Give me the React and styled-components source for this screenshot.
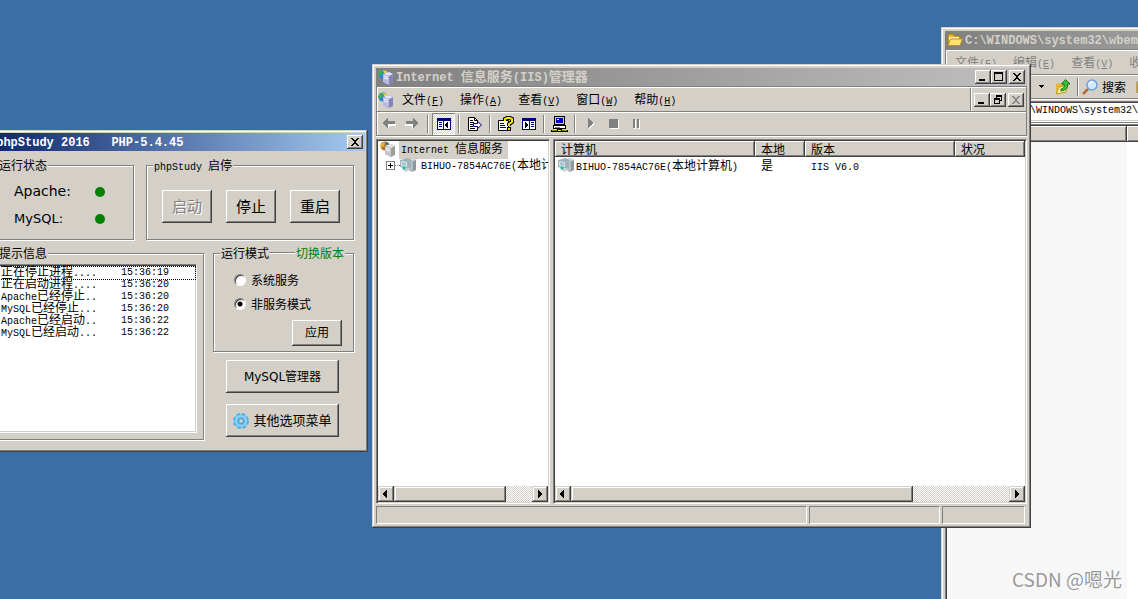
import React, { useState } from "react";
import styled, { createGlobalStyle, css } from "styled-components";

const GlobalStyle = createGlobalStyle`
  * {
    box-sizing: border-box;
  }

  body {
    background: #3a6ea5;
    color: #000;
    font-family: "Noto Sans CJK SC", sans-serif;
    font-size: 12px;
    line-height: 16px;
    margin: 0;
    overflow: hidden;
  }

  button,
  input {
    color: inherit;
    font: inherit;
    margin: 0;
    padding: 0;
  }

  svg {
    flex: none;
  }
`;

const raised = css`
  box-shadow: inset -1px -1px 0 #404040, inset 1px 1px 0 #fff,
    inset -2px -2px 0 #808080;
`;

const sunken = css`
  border: 1px solid;
  border-color: #808080 #fff #fff #808080;
  box-shadow: inset 1px 1px 0 #404040, inset -1px -1px 0 #d4d0c8;
  padding: 1px;
`;

const Desktop = styled.main`
  height: 100vh;
  overflow: hidden;
  position: relative;
`;

const Window = styled.section`
  background: #d4d0c8;
  box-shadow: inset -1px -1px 0 #404040, inset 1px 1px 0 #d4d0c8,
    inset -2px -2px 0 #808080, inset 2px 2px 0 #fff;
  display: flex;
  flex-direction: column;
  padding: 4px;
  position: absolute;
`;

const ExplorerWindow = styled(Window)`
  bottom: -20px;
  left: 941px;
  top: 27px;
  width: 480px;
`;

const IisWindow = styled(Window)`
  height: 464px;
  left: 372px;
  top: 64px;
  width: 659px;
`;

const StudyWindow = styled(Window)`
  height: 322px;
  left: -16px;
  padding: 3px;
  top: 130px;
  width: 384px;
`;

const TitleBar = styled.header`
  align-items: center;
  background: linear-gradient(
    to right,
    ${(props) => (props.$active ? "#0a246a, #a6caf0" : "#808080, #c0c0c0")}
  );
  color: ${(props) => (props.$active ? "#fff" : "#d4d0c8")};
  display: flex;
  flex: none;
  gap: 2px;
  height: 18px;
  padding: 0 2px;
`;

const Title = styled.h1`
  flex: 1;
  font-size: 13px;
  font-weight: bold;
  line-height: 18px;
  margin: 0;
  overflow: hidden;
  white-space: pre;
`;

const TitleLatin = styled.span`
  font-family: "Liberation Mono", monospace;
  font-size: 12px;
`;

const Latin = styled.span`
  font-family: "Liberation Mono", monospace;
  font-size: 10px;
`;

const CaptionButtons = styled.div`
  display: flex;

  button:last-child {
    margin-left: ${(props) => (props.$single ? 0 : 2)}px;
  }
`;

const CaptionButton = styled.button`
  ${raised}
  align-items: center;
  background: #d4d0c8;
  border: 0;
  color: ${(props) => (props.disabled ? "#808080" : "#000")};
  display: flex;
  height: 14px;
  justify-content: center;
  width: 16px;
`;

const Band = styled.div`
  align-items: center;
  border: 1px solid #808080;
  border-top-width: ${(props) => (props.$first ? 1 : 0)}px;
  box-shadow: inset 1px 1px 0 #fff, 0 1px 0 #fff;
  display: flex;
  flex: none;
  height: ${(props) => props.$height}px;
  padding: 1px 1px 0;
`;

const Menu = styled.nav`
  color: ${(props) => (props.$dim ? "#808080" : "#000")};
  display: flex;
  flex: 1;
`;

const MenuItem = styled.button`
  background: none;
  border: 0;
  flex: none;
  padding: 2px 8px 0;
  white-space: nowrap;
`;

const ToolButton = styled.button`
  align-items: center;
  background: ${(props) =>
    props.$pressed
      ? "repeating-conic-gradient(#fff 0 25%, #d4d0c8 0 50%) 0 0 / 2px 2px"
      : "none"};
  border: 0;
  box-shadow: ${(props) =>
    props.$pressed ? "inset 1px 1px 0 #808080, inset -1px -1px 0 #fff" : "none"};
  display: flex;
  flex: none;
  height: 22px;
  justify-content: center;
  width: 23px;
`;

const Separator = styled.span`
  background: #808080;
  box-shadow: 1px 0 0 #fff;
  flex: none;
  height: 18px;
  margin: 0 4px 0 3px;
  width: 1px;
`;

const ChildControls = styled.div`
  align-items: center;
  align-self: stretch;
  border-left: 1px solid #808080;
  box-shadow: inset 1px 0 0 #fff;
  display: flex;
  padding: 0 1px 0 3px;
`;

const Panes = styled.div`
  display: flex;
  flex: 1;
  gap: 3px;
  margin-top: 3px;
  min-height: 0;
`;

const Pane = styled.section`
  ${sunken}
  background: #fff;
  display: flex;
  flex: ${(props) => (props.$width ? `0 0 ${props.$width}px` : "1")};
  flex-direction: column;
  min-width: 0;
`;

const PaneContent = styled.div`
  flex: 1;
  overflow: hidden;
`;

const Tree = styled.ul`
  list-style: none;
  margin: 0;
  padding: 0;
`;

const TreeItem = styled.li`
  align-items: center;
  display: flex;
  height: 16px;
  padding-left: ${(props) => (props.$child ? 8 : 2)}px;
  white-space: nowrap;
`;

const TreeLabel = styled.span`
  background: ${(props) => (props.$selected ? "#d4d0c8" : "none")};
  margin-left: 3px;
  padding: 0 ${(props) => (props.$selected ? 5 : 2)}px 0 2px;
`;

const Expander = styled.button`
  align-items: center;
  background: #fff;
  border: 1px solid #808080;
  display: flex;
  flex: none;
  height: 9px;
  justify-content: center;
  width: 9px;
`;

const Dots = styled.span`
  border-top: 1px dotted #808080;
  flex: none;
  width: 5px;
`;

const Table = styled.table`
  border-collapse: collapse;
  line-height: 16px;
  table-layout: fixed;
  width: 100%;

  th {
    background: #d4d0c8;
    box-shadow: inset -1px -1px 0 #404040, inset 1px 1px 0 #fff,
      inset -2px -2px 0 #808080;
    font-weight: normal;
    height: 16px;
    padding: 0 6px;
    text-align: left;
  }

  td {
    height: 17px;
    padding: 0 6px;
    vertical-align: top;
    white-space: nowrap;
  }

  td:first-child {
    padding: 0 3px;
  }
`;

const Column = styled.col`
  width: ${(props) => (props.$width ? `${props.$width}px` : "auto")};
`;

const ComputerName = styled.span`
  display: flex;
  gap: 2px;
  height: 16px;
`;

const ScrollTrack = styled.div`
  background: repeating-conic-gradient(#fff 0 25%, #d4d0c8 0 50%) 0 0 / 2px 2px;
  display: flex;
  flex: none;
  height: 16px;
`;

const scrollPart = css`
  background: #d4d0c8;
  border: 0;
  box-shadow: inset -1px -1px 0 #404040, inset 1px 1px 0 #d4d0c8,
    inset -2px -2px 0 #808080, inset 2px 2px 0 #fff;
`;

const ScrollButton = styled.button`
  ${scrollPart}
  align-items: center;
  display: flex;
  flex: none;
  height: 16px;
  justify-content: center;
  width: 16px;
`;

const ScrollRange = styled.div`
  flex: 1;
`;

const ScrollThumb = styled.div`
  ${scrollPart}
  height: 16px;
  width: ${(props) => props.$size}%;
`;

const StatusBar = styled.footer`
  display: flex;
  flex: none;
  gap: 2px;
  height: 18px;
  margin: 2px 2px 0 0;
`;

const StatusCell = styled.div`
  border: 1px solid;
  border-color: #808080 #fff #fff #808080;
  flex: ${(props) => (props.$width ? `0 0 ${props.$width}px` : "1")};
`;

const StudyBody = styled.div`
  display: flex;
  flex-direction: column;
  gap: 6px;
  padding: 7px 11px 0 4px;
`;

const StudyRow = styled.div`
  display: flex;
  gap: ${(props) => props.$gap}px;
`;

const Group = styled.fieldset`
  border: 1px solid #808080;
  box-shadow: inset 1px 1px 0 #fff, 1px 1px 0 #fff;
  flex: ${(props) => (props.$grow ? "1" : "none")};
  height: ${(props) => props.$height}px;
  margin: 0;
  min-width: 0;
  padding: 0 6px 6px;
  width: ${(props) => (props.$width ? `${props.$width}px` : "auto")};
`;

const Legend = styled.legend`
  align-items: baseline;
  background: #d4d0c8;
  display: flex;
  height: 14px;
  line-height: 14px;
  padding: 0 1px;
  white-space: pre;
`;

const LegendRule = styled.span`
  align-self: center;
  border-bottom: 1px solid #fff;
  border-top: 1px solid #808080;
  margin-right: 1px;
  width: 26px;
`;

const SwitchLink = styled.a`
  color: #008000;
  text-decoration: none;
`;

const ServiceList = styled.dl`
  font-family: "DejaVu Sans", sans-serif;
  line-height: 27px;
  margin: 0;
  padding: 6px 0 0 16px;
`;

const Service = styled.div`
  align-items: center;
  display: flex;

  dt {
    font-size: ${(props) => props.$size}px;
    width: 81px;
  }

  dd {
    background: #008000;
    border-radius: 50%;
    height: 10px;
    margin: 0;
    width: 10px;
  }
`;

const Launchers = styled.div`
  display: flex;
  gap: 14px;
  padding: 18px 0 0 9px;
`;

const PushButton = styled.button`
  ${raised}
  align-items: center;
  background: #d4d0c8;
  border: 0;
  display: flex;
  flex: none;
  font-family: "DejaVu Sans", "Noto Sans CJK SC", sans-serif;
  font-size: ${(props) => props.$size || 12}px;
  gap: 4px;
  height: 33px;
  justify-content: center;
  width: ${(props) => props.$width || 50}px;

  &:disabled {
    color: #808080;
    text-shadow: 1px 1px 0 #fff;
  }
`;

const ApplyButton = styled(PushButton)`
  height: 26px;
  margin: 4px 5px 0 auto;
`;

const Log = styled.ul`
  ${sunken}
  background: #fff;
  font-family: "Liberation Mono", "Noto Sans CJK SC", monospace;
  height: 169px;
  line-height: 12px;
  list-style: none;
  margin: 4px 0 0;
`;

const LogLine = styled.li`
  display: grid;
  grid-template-columns: 120px auto;
  height: 12px;
  outline: ${(props) => (props.$focused ? "1px dotted #000" : "none")};
  padding-left: 1px;
  white-space: pre;

  &:first-child {
    margin-top: 1px;
  }
`;

const Side = styled.div`
  display: flex;
  flex: 0 0 141px;
  flex-direction: column;
`;

const SideButtons = styled.div`
  display: flex;
  flex-direction: column;
  gap: 11px;
  padding: 8px 0 0 13px;
`;

const Radios = styled.div`
  padding: 8px 0 0 14px;
`;

const RadioLabel = styled.label`
  align-items: center;
  display: flex;
  gap: 5px;
  line-height: 24px;
`;

const Radio = styled.input.attrs({ type: "radio" })`
  appearance: none;
  background: ${(props) =>
    props.checked ? "radial-gradient(#000 2px, #fff 3px)" : "#fff"};
  border: 1px solid;
  border-color: #808080 #fff #fff #808080;
  border-radius: 50%;
  box-shadow: inset 1px 1px 0 #404040;
  height: 12px;
  width: 12px;
`;

const ExplorerTools = styled(Band)`
  padding-left: 91px;
`;

const SearchButton = styled.button`
  align-items: center;
  background: none;
  border: 0;
  display: flex;
  gap: 4px;
  margin-right: 10px;
`;

const AddressBand = styled(Band)`
  padding-left: 50px;
`;

const AddressBox = styled.div`
  ${sunken}
  align-items: center;
  background: #fff;
  display: flex;
  flex: 1;
  gap: 4px;
  height: 21px;
`;

const AddressInput = styled.input`
  background: none;
  border: 0;
  flex: 1;
  font-family: "Liberation Mono", monospace;
  font-size: 10px;
  min-width: 0;
  outline: 0;
`;

const FilePane = styled.div`
  ${sunken}
  background: #fff;
  display: grid;
  flex: 1;
  grid-template-columns: 180px auto;
  grid-template-rows: 16px auto;
  margin-top: 1px;
`;

const FileHeader = styled.div`
  ${raised}
  background: #d4d0c8;
`;

const SortedColumn = styled.div`
  background: #f7f7f7;
`;

const Watermark = styled.p`
  bottom: 6px;
  color: #999;
  font-family: "Noto Sans CJK SC", sans-serif;
  font-size: 19px;
  line-height: 28px;
  margin: 0;
  position: absolute;
  right: 16px;
  text-shadow: 1px 1px 0 #fff;
`;

/* Half-width runs are set smaller so that two of them fill one full-width cell */
const Mixed = ({ text, as: Part = Latin }) =>
  text
    .split(/([\x20-\x7e]+)/)
    .filter(Boolean)
    .map((run, i) => (/^[\x20-\x7e]/.test(run) ? <Part key={i}>{run}</Part> : run));

const Glyph = ({ name }) => (
  <svg width="10" height="10" viewBox="0 0 10 10" shapeRendering="crispEdges" fill="currentColor">
    {name === "min" && <path d="M1 7h6v2H1z" />}
    {name === "max" && <path fillRule="evenodd" d="M0 0h9v9H0zM1 2v6h7V2z" />}
    {name === "close" && (
      <path d="M1 1h2v1h1v1h2V2h1V1h2v1H8v1H7v1H6v2h1v1h1v1h1v1H7V8H6V7H4v1H3v1H1V8h1V7h1V6h1V4H3V3H2V2H1z" />
    )}
    {name === "restore" && (
      <path fillRule="evenodd" d="M3 0h6v6H7V5h1V2H4v1H3zM1 3h6v6H1zM2 5v3h4V5z" />
    )}
    {name === "left" && <path d="M6 1v8H5V8H4V7H3V6H2V4h1V3h1V2h1V1z" />}
    {name === "right" && <path d="M3 1v8h1V8h1V7h1V6h1V4H6V3H5V2H4V1z" />}
  </svg>
);

const Icon = ({ size = 16, children }) => (
  <svg width={size} height={size} viewBox="0 0 16 16">
    {children}
  </svg>
);

const ServerIcon = ({ warm }) => (
  <Icon>
    <circle cx="5" cy="5" r="4.5" fill={warm ? "#b8742c" : "#2b87cf"} />
    <path d="M0 5l2-4 3 0-1 4-3 2z" fill={warm ? "#e2b23c" : "#3fae49"} />
    <path d="M5 1l4 1v2l-3 0z" fill={warm ? "#2c8a86" : "#f0d040"} />
    <path d="M5 5l6-2 4 2v9l-4 2-6-3z" fill={warm ? "#9c9c98" : "#8585b8"} />
    <path d="M5 5l6-2 4 2-4 2z" fill={warm ? "#e4e4e0" : "#e3e3fa"} />
    <path d="M5 5l6 2v9l-6-3z" fill={warm ? "#c6c6c2" : "#b9b9e4"} />
    <path d="M6 7l4 1M6 9l4 1" stroke="#f6f6ff" />
  </Icon>
);

const ComputerIcon = () => (
  <Icon>
    <path d="M9 2l4-1 3 2v10l-4 2-3-2z" fill="#8b989f" />
    <path d="M9 2l4-1 3 2-3 1z" fill="#d8e0e3" />
    <path d="M9 2l4 2v11l-4-2z" fill="#b3bfc4" />
    <path d="M0 3l8-2 3 2v7l-3 2-8-2z" fill="#9eb2ba" />
    <path d="M1 4l6 1v5l-6-1z" fill="#d2e4e9" />
    <path d="M2 5l4 1v3L2 8z" fill="#a5c6d0" />
    <path d="M2 12l5-1 3 2-4 2z" fill="#c8d3d6" />
    <circle cx="4" cy="11" r="1.5" fill="#29b3a6" />
  </Icon>
);

const ArrowIcon = ({ flip }) => (
  <svg width="15" height="14" viewBox="0 0 15 14" shapeRendering="crispEdges">
    <g transform={flip ? "matrix(-1 0 0 1 14 0)" : undefined}>
      <path d="M6 3l-4 4 5 5V9h7V7H7z" fill="#fff" />
      <path d="M6 1v3h7v3H6v4H5v-1H4V9H3V8H2V7H1V5h1V4h1V3h1V2h1V1z" fill="#808080" />
    </g>
  </svg>
);

const PaneIcon = ({ flip }) => (
  <svg width="16" height="14" viewBox="0 0 16 14" shapeRendering="crispEdges">
    <path d="M1 1h14v12H1z" fill="#000080" />
    {flip ? (
      <g>
        <path d="M2 4h6v8H2zM9 4h5v8H9z" fill="#fff" />
        <path d="M4 5v6h1v-1h1V9h1V7H6V6H5V5z" fill="#000" />
        <path d="M10 5h3v1h-3zM10 7h3v1h-3zM10 9h3v1h-3z" fill="#000080" />
      </g>
    ) : (
      <g>
        <path d="M2 4h5v8H2zM8 4h6v8H8z" fill="#fff" />
        <path d="M12 5v6h-1v-1h-1V9H9V7h1V6h1V5z" fill="#000" />
        <path d="M3 5h3v1H3zM3 7h3v1H3zM3 9h3v1H3z" fill="#000080" />
      </g>
    )}
  </svg>
);

const ExportIcon = () => (
  <Icon>
    <path d="M1.500 1.500h6l3 3v10h-9z" fill="#fff" stroke="#000" />
    <path d="M7.500 1.500v3h3M3 4.500h3M3 6.500h4M3 8.500h3M3 10.500h3M3 12.500h5" fill="none" stroke="#000" />
    <path d="M6.500 7.500h4v-2l4 3.500-4 3.500v-2h-4z" fill="#fff" stroke="#000080" />
  </Icon>
);

const HelpIcon = () => (
  <Icon>
    <path d="M.500 4.500h10v10h-10z" fill="#fff" stroke="#000" />
    <path d="M2 7.500h4M2 9.500h5M2 11.500h6" stroke="#000080" />
    <path d="M7 5V3l2-1h3l2 1v3l-3 2v2" fill="none" stroke="#000" strokeWidth="4" />
    <path d="M7 5V3l2-1h3l2 1v3l-3 2v2" fill="none" stroke="#ffe800" strokeWidth="2" />
    <path d="M9 11h4v4H9z" fill="#000" />
    <path d="M10 12h2v2h-2z" fill="#ffe800" />
  </Icon>
);

const NetworkIcon = () => (
  <svg width="17" height="17" viewBox="0 0 17 17" shapeRendering="crispEdges">
    <path d="M3 0h11v9H3z" fill="#000" />
    <path d="M4 1h9v7H4z" fill="#d4d0c8" />
    <path d="M5 2h7v5H5z" fill="#0000d0" />
    <path d="M6 3h2v1H6z" fill="#fff" />
    <path d="M2 9h13v4H2z" fill="#000" />
    <path d="M3 10h11v2H3z" fill="#fff" />
    <path d="M4 11h5v1H4z" fill="#808080" />
    <path d="M8 13h1v1H8zM0 14h17v2H0z" fill="#000" />
    <path d="M1 14h5v1H1zM11 14h5v1h-5z" fill="#808000" />
    <path d="M6 13h5v3H6z" fill="#000" />
    <path d="M7 14h3v1H7z" fill="#ffe800" />
  </svg>
);

const MediaIcon = ({ d }) => (
  <svg width="12" height="12" viewBox="0 0 12 12" shapeRendering="crispEdges">
    <path d={d} fill="#fff" transform="translate(1 1)" />
    <path d={d} fill="#808080" />
  </svg>
);

const FolderIcon = () => (
  <Icon>
    <path d="M1 13V3.500L2.500 2H6l1.500 2H13v3" fill="#e8b62c" stroke="#a47c12" />
    <path d="M2 5h10v7H2z" fill="#fff3b8" />
    <path d="M1 13.500L3.500 7h12L13 13.500z" fill="#ffe27a" stroke="#b88f1c" />
  </Icon>
);

const UpFolderIcon = () => (
  <Icon>
    <path d="M1 15V5l2-1 3 1 6-1v9z" fill="#e6b93a" />
    <path d="M1 15L4 8l9-2-2 7z" fill="#fff09a" stroke="#c39a22" />
    <path d="M6 10c3-1 3.500-2 3-5H6.500L10.500.500 15 5h-2.500c.5 4-2 6.500-6.500 7z" fill="#3fbf3f" stroke="#107a18" />
  </Icon>
);

const SearchIcon = () => (
  <Icon>
    <path d="M1 15l5-5" stroke="#b96a34" strokeWidth="2.500" />
    <circle cx="10" cy="6" r="5" fill="#cfeaff" stroke="#6f9fe0" strokeWidth="1.500" />
    <path d="M7 5c1-2 3-2.500 4-2" fill="none" stroke="#fff" strokeWidth="1.500" />
  </Icon>
);

const GearIcon = () => (
  <Icon>
    <circle cx="8" cy="8" r="6.500" fill="#67c0f5" stroke="#4aaeea" strokeWidth="3" strokeDasharray="3.400 1.700" />
    <circle cx="8" cy="8" r="6.500" fill="#67c0f5" />
    <circle cx="8" cy="8" r="5" fill="none" stroke="#8fd3fb" strokeWidth="1.500" />
    <circle cx="8" cy="8" r="2.500" fill="#d4d0c8" stroke="#2e95d6" />
  </Icon>
);

const MenuBar = ({ items, dim }) => (
  <Menu $dim={dim}>
    {items.map(([name, key]) => (
      <MenuItem key={name}>
        {name}
        <Latin>
          (<u>{key}</u>)
        </Latin>
      </MenuItem>
    ))}
  </Menu>
);

const ScrollBar = ({ size }) => (
  <ScrollTrack>
    <ScrollButton aria-label="向左滚动">
      <Glyph name="left" />
    </ScrollButton>
    <ScrollRange>
      <ScrollThumb $size={size} />
    </ScrollRange>
    <ScrollButton aria-label="向右滚动">
      <Glyph name="right" />
    </ScrollButton>
  </ScrollTrack>
);

const Explorer = () => (
  <ExplorerWindow>
    <TitleBar>
      <FolderIcon />
      <Title>
        <TitleLatin>{"C:\\WINDOWS\\system32\\wbem\\"}</TitleLatin>
      </Title>
    </TitleBar>
    <Band $first $height={26}>
      <MenuBar
        dim
        items={[
          ["文件", "F"],
          ["编辑", "E"],
          ["查看", "V"],
          ["收藏", "A"],
        ]}
      />
    </Band>
    <ExplorerTools $height={24}>
      <svg width="14" height="4" viewBox="0 0 14 4" shapeRendering="crispEdges">
        <path d="M2 0h5v1H6v1H5v1H4V2H3V1H2z" />
      </svg>
      <ToolButton aria-label="向上">
        <UpFolderIcon />
      </ToolButton>
      <Separator />
      <SearchButton>
        <SearchIcon />
        搜索
      </SearchButton>
      <FolderIcon />
    </ExplorerTools>
    <AddressBand $height={24}>
      <AddressBox>
        <FolderIcon />
        <AddressInput aria-label="地址" defaultValue={"C:\\WINDOWS\\system32\\wbem\\"} />
      </AddressBox>
    </AddressBand>
    <FilePane>
      <FileHeader />
      <FileHeader />
      <SortedColumn />
    </FilePane>
  </ExplorerWindow>
);

const logLines = [
  ["正在停止进程....", "15:36:19"],
  ["正在启动进程....", "15:36:20"],
  ["Apache已经停止..", "15:36:20"],
  ["MySQL已经停止...", "15:36:20"],
  ["Apache已经启动..", "15:36:22"],
  ["MySQL已经启动...", "15:36:22"],
];

const PhpStudy = () => {
  const [mode, setMode] = useState("process");

  return (
    <StudyWindow>
      <TitleBar $active>
        <Title>
          <TitleLatin>{" phpStudy 2016   PHP-5.4.45"}</TitleLatin>
        </Title>
        <CaptionButtons $single>
          <CaptionButton aria-label="关闭">
            <Glyph name="close" />
          </CaptionButton>
        </CaptionButtons>
      </TitleBar>
      <StudyBody>
        <StudyRow $gap={12}>
          <Group $grow $height={82}>
            <Legend>运行状态</Legend>
            <ServiceList>
              <Service $size={14}>
                <dt>Apache:</dt>
                <dd />
              </Service>
              <Service $size={13}>
                <dt>MySQL:</dt>
                <dd />
              </Service>
            </ServiceList>
          </Group>
          <Group $width={208} $height={82}>
            <Legend>
              <Latin>phpStudy </Latin>
              启停
            </Legend>
            <Launchers>
              <PushButton $size={15} disabled>
                启动
              </PushButton>
              <PushButton $size={15}>停止</PushButton>
              <PushButton $size={15}>重启</PushButton>
            </Launchers>
          </Group>
        </StudyRow>
        <StudyRow $gap={9}>
          <Group $grow $height={194}>
            <Legend>提示信息</Legend>
            <Log>
              {logLines.map(([message, time], i) => (
                <LogLine key={i} $focused={i === 0}>
                  <span>
                    <Mixed text={message} />
                  </span>
                  <Latin as="time">{time}</Latin>
                </LogLine>
              ))}
            </Log>
          </Group>
          <Side>
            <Group $height={106}>
              <Legend>
                运行模式
                <LegendRule />
                <SwitchLink href="#version">切换版本</SwitchLink>
              </Legend>
              <Radios>
                <RadioLabel>
                  <Radio
                    name="mode"
                    checked={mode === "service"}
                    onChange={() => setMode("service")}
                  />
                  系统服务
                </RadioLabel>
                <RadioLabel>
                  <Radio
                    name="mode"
                    checked={mode === "process"}
                    onChange={() => setMode("process")}
                  />
                  非服务模式
                </RadioLabel>
              </Radios>
              <ApplyButton>应用</ApplyButton>
            </Group>
            <SideButtons>
              <PushButton $width={113}>MySQL管理器</PushButton>
              <PushButton $width={113} $size={13}>
                <GearIcon />
                其他选项菜单
              </PushButton>
            </SideButtons>
          </Side>
        </StudyRow>
      </StudyBody>
    </StudyWindow>
  );
};

const IisManager = () => (
  <IisWindow>
    <TitleBar>
      <ServerIcon />
      <Title>
        <Mixed text="Internet 信息服务(IIS)管理器" as={TitleLatin} />
      </Title>
      <CaptionButtons>
        <CaptionButton aria-label="最小化">
          <Glyph name="min" />
        </CaptionButton>
        <CaptionButton aria-label="最大化">
          <Glyph name="max" />
        </CaptionButton>
        <CaptionButton aria-label="关闭">
          <Glyph name="close" />
        </CaptionButton>
      </CaptionButtons>
    </TitleBar>
    <Band $first $height={26}>
      <ServerIcon />
      <MenuBar
        items={[
          ["文件", "F"],
          ["操作", "A"],
          ["查看", "V"],
          ["窗口", "W"],
          ["帮助", "H"],
        ]}
      />
      <ChildControls>
        <CaptionButtons>
          <CaptionButton aria-label="最小化子窗口">
            <Glyph name="min" />
          </CaptionButton>
          <CaptionButton aria-label="还原子窗口">
            <Glyph name="restore" />
          </CaptionButton>
          <CaptionButton aria-label="关闭子窗口" disabled>
            <Glyph name="close" />
          </CaptionButton>
        </CaptionButtons>
      </ChildControls>
    </Band>
    <Band $height={24}>
      <ToolButton aria-label="后退" disabled>
        <ArrowIcon />
      </ToolButton>
      <ToolButton aria-label="前进" disabled>
        <ArrowIcon flip />
      </ToolButton>
      <Separator />
      <ToolButton aria-label="显示树" $pressed>
        <PaneIcon />
      </ToolButton>
      <Separator />
      <ToolButton aria-label="导出列表">
        <ExportIcon />
      </ToolButton>
      <Separator />
      <ToolButton aria-label="帮助">
        <HelpIcon />
      </ToolButton>
      <ToolButton aria-label="操作窗格">
        <PaneIcon flip />
      </ToolButton>
      <Separator />
      <ToolButton aria-label="连接计算机">
        <NetworkIcon />
      </ToolButton>
      <Separator />
      <ToolButton aria-label="启动" disabled>
        <MediaIcon d="M3 0h1v1h1v1h1v1h1v1h1v2H7v1H6v1H5v1H4v1H3z" />
      </ToolButton>
      <ToolButton aria-label="停止" disabled>
        <MediaIcon d="M1 1h9v9H1z" />
      </ToolButton>
      <ToolButton aria-label="暂停" disabled>
        <MediaIcon d="M2 1h2v9H2zM6 1h2v9H6z" />
      </ToolButton>
    </Band>
    <Panes>
      <Pane $width={174}>
        <PaneContent>
          <Tree>
            <TreeItem>
              <ServerIcon warm />
              <TreeLabel $selected>
                <Mixed text="Internet 信息服务" />
              </TreeLabel>
            </TreeItem>
            <TreeItem $child>
              <Expander aria-label="展开">
                <svg width="5" height="5" viewBox="0 0 5 5">
                  <path d="M2 0h1v2h2v1H3v2H2V3H0V2h2z" />
                </svg>
              </Expander>
              <Dots />
              <ComputerIcon />
              <TreeLabel>
                <Mixed text="BIHUO-7854AC76E(本地计算机)" />
              </TreeLabel>
            </TreeItem>
          </Tree>
        </PaneContent>
        <ScrollBar size={81} />
      </Pane>
      <Pane>
        <PaneContent>
          <Table>
            <colgroup>
              <Column $width={200} />
              <Column $width={50} />
              <Column $width={150} />
              <Column />
            </colgroup>
            <thead>
              <tr>
                <th>计算机</th>
                <th>本地</th>
                <th>版本</th>
                <th>状况</th>
              </tr>
            </thead>
            <tbody>
              <tr>
                <td>
                  <ComputerName>
                    <ComputerIcon />
                    <span>
                      <Mixed text="BIHUO-7854AC76E(本地计算机)" />
                    </span>
                  </ComputerName>
                </td>
                <td>是</td>
                <td>
                  <Latin>IIS V6.0</Latin>
                </td>
                <td />
              </tr>
            </tbody>
          </Table>
        </PaneContent>
        <ScrollBar size={78} />
      </Pane>
    </Panes>
    <StatusBar>
      <StatusCell />
      <StatusCell $width={131} />
      <StatusCell $width={83} />
    </StatusBar>
  </IisWindow>
);

const App = () => (
  <Desktop>
    <GlobalStyle />
    <Explorer />
    <PhpStudy />
    <IisManager />
    <Watermark>CSDN @嗯光</Watermark>
  </Desktop>
);

export default App;
